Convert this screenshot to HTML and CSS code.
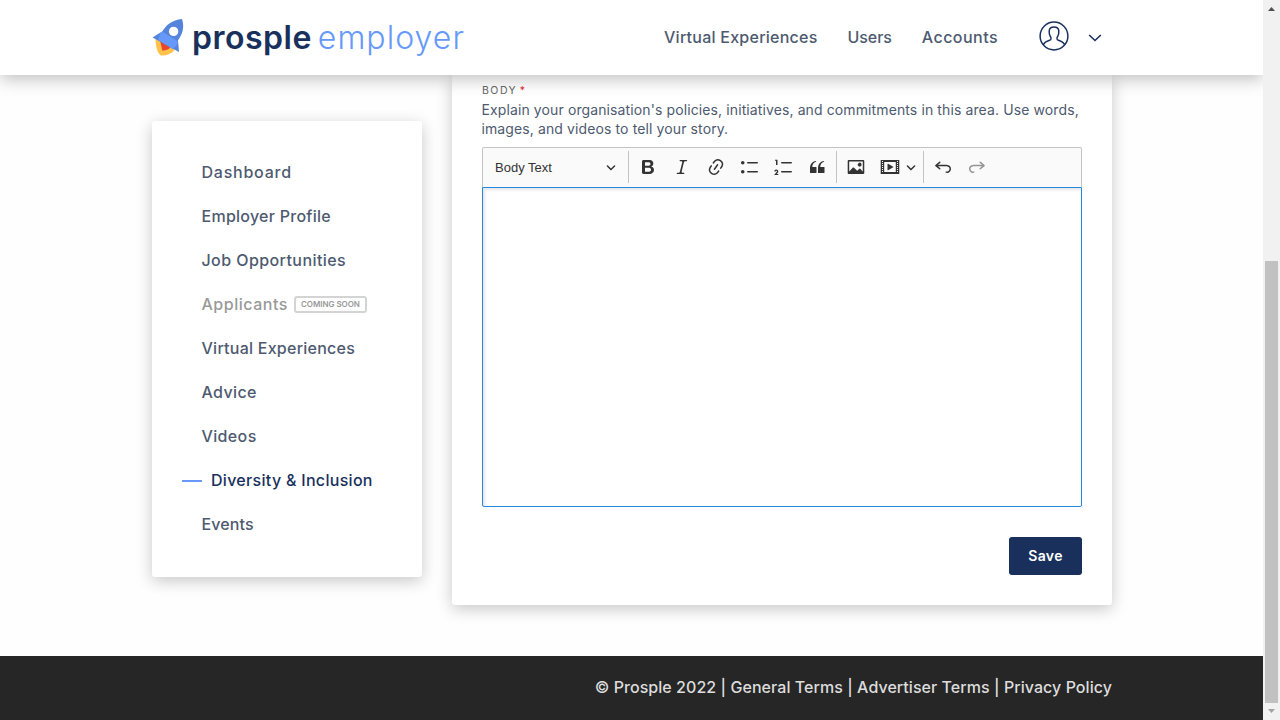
FILE: index.html
```
<!DOCTYPE html>
<html lang="en">
<head>
<meta charset="utf-8">
<title>Prosple Employer</title>
<link rel="stylesheet" href="styles.css">
</head>
<body>
<div class="viewport">
<div class="page">
  <header class="header">
    <a class="logo">
      <svg class="rocket" width="33" height="40" viewBox="0 0 33 40">
        <path d="M3.500 20.500C3.500 30 6 36 9 37.500C14 38 19.500 36 23 31.500Z" fill="#ffc24b"/>
        <path d="M8 22.500L10.300 32.500C14 32.500 17.500 31.500 19 28Z" fill="#e8472e"/>
        <path d="M30 1C20 2 14 7 10 14L8 22L24 30L25.500 23C30 17 33 10 30 1Z" fill="#5584dc"/>
        <path d="M.5 19.500L10 13.500L26 22.500L27 34Z" fill="#5584dc"/>
        <path d="M10 13.500L26 23.500C25 27 23.500 29 20.500 31L6.500 22C7 18.500 8 15.500 10 13.500Z" fill="#6699fa"/>
        <circle cx="21.600" cy="13.400" r="4.700" fill="#fff"/>
      </svg>
      <span class="brand">prosple</span>
      <span class="product">employer</span>
    </a>
    <nav class="topnav">
      <a class="t-virtual">Virtual Experiences</a>
      <a class="t-users">Users</a>
      <a class="t-accounts">Accounts</a>
    </nav>
    <div class="account">
      <svg class="avatar" width="30" height="30" viewBox="0 0 30 30" fill="none" stroke="#19305d" stroke-width="1.500"><circle cx="15" cy="15" r="13.900"/><path d="M4.300 24C5 20.500 10 20 11.700 18.700C12.300 18 12.200 16.800 11.500 15.800C10.400 14 10 11.800 10.200 9.700C10.500 7.200 12.500 6 15 6S19.500 7.200 19.800 9.700C20 11.800 19.600 14 18.500 15.800C17.800 16.800 17.700 18 18.300 18.700C20 20 25 20.500 25.700 24"/></svg>
      <svg class="caret" width="14" height="8" viewBox="0 0 14 8" fill="none" stroke="#19305d" stroke-width="1.600"><path d="M1.200 1L7 6.500L12.800 1"/></svg>
    </div>
  </header>
  <main class="content">
    <aside class="sidebar">
      <a class="item t-dashboard">Dashboard</a>
      <a class="item t-profile">Employer Profile</a>
      <a class="item t-jobs">Job Opportunities</a>
      <a class="item muted">Applicants<span class="badge">COMING SOON</span></a>
      <a class="item t-virtual">Virtual Experiences</a>
      <a class="item t-advice">Advice</a>
      <a class="item t-advice">Videos</a>
      <a class="item active">Diversity &amp; Inclusion</a>
      <a class="item t-events">Events</a>
    </aside>
    <section class="panel">
      <div class="label">BODY <span class="required">*</span></div>
      <p class="help">Explain your organisation's policies, initiatives, and commitments in this area. Use words,<br>images, and videos to tell your story.</p>
      <div class="editor">
        <div class="toolbar">
          <div class="select">Body Text <svg class="arrow" viewBox="0 0 10 10"><path d="M.941 4.523a.75.75 0 1 1 1.060-1.060l3.006 3.005 3.005-3.005a.75.75 0 1 1 1.060 1.060l-3.549 3.550a.75.75 0 0 1-1.168-.136L.941 4.523z"/></svg></div>
          <span class="sep"></span>
          <span class="tool"><svg viewBox="0 0 20 20"><path d="M10.187 17H5.773c-.637 0-1.092-.138-1.364-.415-.273-.277-.409-.718-.409-1.323V4.738c0-.617.14-1.062.419-1.332.279-.27.73-.406 1.354-.406h4.680c.69 0 1.288.041 1.793.124.506.083.96.242 1.360.477.341.197.644.447.906.75a3.262 3.262 0 0 1 .808 2.162c0 1.401-.722 2.426-2.167 3.075C15.050 10.175 16 11.315 16 13.010a3.756 3.756 0 0 1-2.296 3.504 6.100 6.100 0 0 1-1.517.377c-.571.073-1.238.11-2 .11zm-.217-6.217H7v4.087h3.069c1.977 0 2.965-.69 2.965-2.072 0-.707-.256-1.220-.768-1.537-.512-.319-1.277-.478-2.296-.478zM7 5.130v3.619h2.606c.729 0 1.292-.067 1.690-.2a1.600 1.600 0 0 0 .91-.765c.165-.267.247-.566.247-.897 0-.707-.26-1.176-.778-1.409-.519-.232-1.310-.348-2.375-.348H7z"/></svg></span>
          <span class="tool"><svg viewBox="0 0 20 20"><path d="m9.586 14.633.021.004c-.036.335.095.655.393.962.082.083.173.15.274.201h1.474a.6.6 0 1 1 0 1.200H5.304a.6.6 0 0 1 0-1.200h1.150c.474-.07.809-.182 1.005-.334.157-.122.291-.32.404-.597l2.416-9.550a1.053 1.053 0 0 0-.281-.823 1.120 1.120 0 0 0-.442-.296H8.150a.6.6 0 0 1 0-1.200h6.443a.6.6 0 1 1 0 1.200h-1.195c-.376.056-.65.155-.823.296-.215.175-.423.439-.623.79l-2.366 9.347z"/></svg></span>
          <span class="tool"><svg viewBox="0 0 20 20"><path d="m11.077 15 .991-1.416a.75.75 0 1 1 1.229.86l-1.148 1.640a.748.748 0 0 1-.217.206 5.251 5.251 0 0 1-8.503-5.955.741.741 0 0 1 .12-.274l1.147-1.639a.75.75 0 1 1 1.228.86L4.933 10.700l.006.003a3.750 3.750 0 0 0 6.132 4.294l.006.004zm5.494-5.335a.748.748 0 0 1-.12.274l-1.147 1.639a.75.75 0 1 1-1.228-.86l.86-1.230a3.750 3.750 0 0 0-6.144-4.301l-.86 1.229a.75.75 0 0 1-1.229-.86l1.148-1.640a.748.748 0 0 1 .217-.206 5.251 5.251 0 0 1 8.503 5.955zm-4.563-2.532a.75.75 0 0 1 .184 1.045l-3.155 4.505a.75.75 0 1 1-1.229-.86l3.155-4.506a.75.75 0 0 1 1.045-.184z"/></svg></span>
          <span class="tool"><svg viewBox="0 0 20 20"><path d="M7 5.750c0 .414.336.75.75.75h9.500a.75.75 0 1 0 0-1.500h-9.500a.75.75 0 0 0-.75.75zm-6 0C1 4.784 1.777 4 2.750 4c.966 0 1.750.777 1.750 1.750 0 .966-.777 1.750-1.750 1.750C1.784 7.500 1 6.723 1 5.750zm6 9c0 .414.336.75.75.75h9.500a.75.75 0 1 0 0-1.500h-9.500a.75.75 0 0 0-.75.75zm-6 0c0-.966.777-1.750 1.750-1.750.966 0 1.750.777 1.750 1.750 0 .966-.777 1.750-1.750 1.750-.966 0-1.750-.777-1.750-1.750z"/></svg></span>
          <span class="tool"><svg viewBox="0 0 20 20"><path d="M7 5.750c0 .414.336.75.75.75h9.500a.75.75 0 1 0 0-1.500h-9.500a.75.75 0 0 0-.75.75zM3.500 3v5H2V3.700H1v-1h2.500V3zM.343 17.857l2.590-3.257H2.920a.6.6 0 1 0-1.040 0H.302a2 2 0 1 1 3.995 0h-.001c-.048.405-.16.734-.333.988-.175.254-.59.692-1.244 1.312H4.300v1h-4l.043-.043zM7 14.750a.75.75 0 0 1 .75-.75h9.500a.75.75 0 1 1 0 1.500h-9.500a.75.75 0 0 1-.75-.75z"/></svg></span>
          <span class="tool"><svg viewBox="0 0 20 20"><path d="M3 10.423a6.500 6.500 0 0 1 6.056-6.408l.038.67C6.448 5.423 5.354 7.663 5.220 10H9c.552 0 .5.432.5.986v4.511c0 .554-.448.503-1 .503h-5c-.552 0-.5-.449-.5-1.003v-4.574zm8 0a6.500 6.500 0 0 1 6.056-6.408l.038.67c-2.646.739-3.740 2.979-3.873 5.315H17c.552 0 .5.432.5.986v4.511c0 .554-.448.503-1 .503h-5c-.552 0-.5-.449-.5-1.003v-4.574z"/></svg></span>
          <span class="sep"></span>
          <span class="tool"><svg viewBox="0 0 20 20"><path d="M6.910 10.540c.26-.23.64-.21.88.03l3.360 3.140 2.230-2.060a.64.64 0 0 1 .87 0l2.520 2.970V4.500H3.200v10.120l3.710-4.080zm10.270-7.510c.6 0 1.090.47 1.090 1.050v11.840c0 .59-.49 1.060-1.090 1.060H2.790c-.6 0-1.090-.47-1.090-1.060V4.080c0-.58.49-1.050 1.100-1.050h14.380zm-5.220 5.560a1.960 1.960 0 1 1 3.400-1.960 1.960 1.960 0 0 1-3.400 1.960z"/></svg></span>
          <span class="tool"><svg viewBox="0 0 20 20"><path d="M18.680 3.030c.6 0 .59-.03.59.55v12.840c0 .59.01.56-.59.56H1.290c-.6 0-.59.03-.59-.56V3.580c0-.58-.01-.55.6-.55h17.380zM15.770 15V5H4.200v10h11.570zM2 4v1h1V4H2zm0 2v1h1V6H2zm0 2v1h1V8H2zm0 2v1h1v-1H2zm0 2v1h1v-1H2zm0 2v1h1v-1H2zM17 4v1h1V4h-1zm0 2v1h1V6h-1zm0 2v1h1V8h-1zm0 2v1h1v-1h-1zm0 2v1h1v-1h-1zm0 2v1h1v-1h-1zM7.500 7.177a.4.4 0 0 1 .593-.351l5.133 2.824a.4.4 0 0 1 0 .7l-5.133 2.824a.4.4 0 0 1-.593-.35V7.176v.001z"/></svg></span>
          <svg class="arrow media-arrow" viewBox="0 0 10 10"><path d="M.941 4.523a.75.75 0 1 1 1.060-1.060l3.006 3.005 3.005-3.005a.75.75 0 1 1 1.060 1.060l-3.549 3.550a.75.75 0 0 1-1.168-.136L.941 4.523z"/></svg>
          <span class="sep"></span>
          <span class="tool"><svg viewBox="0 0 20 20"><path id="undo" d="m5.042 9.367 2.189 1.837a.75.75 0 0 1-.965 1.149l-3.788-3.180a.747.747 0 0 1-.21-.284.75.75 0 0 1 .17-.945L6.230 4.762a.75.75 0 1 1 .964 1.150L4.863 7.866h8.917A.75.75 0 0 1 14 7.900a4 4 0 1 1-1.477 7.718l.344-1.489a2.500 2.500 0 1 0 1.094-4.730l.008-.032H5.042z"/></svg></span>
          <span class="tool disabled"><svg viewBox="0 0 20 20"><use href="#undo" transform="matrix(-1 0 0 1 20 0)"/></svg></span>
        </div>
        <div class="canvas"></div>
      </div>
      <button class="save">Save</button>
    </section>
  </main>
  <footer class="footer">© Prosple 2022 | General Terms | Advertiser Terms | Privacy Policy</footer>
</div>
<div class="scrollbar">
  <svg width="7" height="4" viewBox="0 0 7 4"><path d="M0 4L3.500 0L7 4Z" fill="#505050"/></svg>
  <div class="thumb"></div>
  <svg width="7" height="4" viewBox="0 0 7 4"><path d="M0 0L3.500 4L7 0Z" fill="#a3a3a3"/></svg>
</div>
</div>
</body>
</html>
```
FILE: styles.css
```
* { box-sizing: border-box; }
body { margin: 0; font-family: Inter, sans-serif; background: #fff; color: #4d5a70; }
.viewport { display: flex; width: 1280px; height: 720px; overflow: hidden; }
.page { width: 1263px; overflow: hidden; background: #fefefe; }

.header { position: relative; z-index: 1; display: flex; align-items: center; height: 75px; padding: 0 161px 0 152px; background: #fff; box-shadow: 0 4px 16px rgba(0, 0, 0, .25); }
.logo { display: flex; align-items: center; height: 75px; }
.rocket { display: block; }
.brand { margin-left: 7px; font-size: 32px; font-weight: 600; letter-spacing: .5px; color: #19305d; }
.product { margin-left: 6px; font-size: 32px; font-weight: 350; letter-spacing: 1.050px; color: #6699fa; }
.topnav { display: flex; gap: 30px; margin-left: auto; padding-bottom: 2px; font-size: 16px; font-weight: 480; }
.account { display: flex; align-items: center; gap: 19px; margin-left: 41px; }
.avatar { margin-bottom: 3px; }

.content { display: flex; gap: 30px; align-items: flex-start; height: 581px; padding: 0 151px 0 152px; }
.sidebar { width: 270px; height: 456px; margin-top: 46px; padding: 29px 30px; border-radius: 3px; background: #fff; box-shadow: 0 4px 16px rgba(0, 0, 0, .22); }
.item { display: flex; align-items: center; height: 44px; padding-left: 19.500px; font-size: 16px; font-weight: 480; white-space: nowrap; }
.muted { color: #999; letter-spacing: .52px; }
.badge { display: flex; align-items: center; height: 17px; margin-left: 6px; padding: 0 5px; border: 2px solid #d4d4d4; border-radius: 3px; font-size: 8px; font-weight: 600; letter-spacing: -.03px; }
.active { padding-left: 0; color: #19305d; letter-spacing: .3px; }
.active::before { content: ""; width: 20px; height: 2px; margin: 2px 9px 0 0; background: #6699fa; }
.t-virtual { letter-spacing: .25px; }
.t-users { letter-spacing: -.1px; }
.t-accounts { letter-spacing: .46px; }
.t-dashboard { letter-spacing: .76px; }
.t-profile { letter-spacing: .26px; }
.t-jobs { letter-spacing: .42px; }
.t-advice { letter-spacing: .36px; }
.t-events { letter-spacing: .12px; }

.panel { width: 660px; height: 530px; padding: 8px 30px 30px; border-radius: 0 0 3px 3px; background: #fff; box-shadow: 0 4px 16px rgba(0, 0, 0, .22); }
.label { height: 17px; font-size: 10.500px; line-height: 15px; letter-spacing: 1.500px; color: #666; }
.required { margin-left: -2px; color: #e02b2b; }
.help { margin: 0 0 9px -.5px; font-size: 14px; line-height: 19px; letter-spacing: .11px; white-space: nowrap; }
.toolbar { display: flex; align-items: center; height: 40px; padding: 0 0 1px 4px; border: 1px solid #c4c4c4; border-bottom: 0; border-radius: 2px 2px 0 0; background: #fafafa; fill: #333; }
.select { display: flex; align-items: center; justify-content: space-between; width: 141px; padding: 0 12px 0 8px; font: 13px "Liberation Sans", sans-serif; color: #333; }
.arrow { width: 10px; height: 10px; }
.media-arrow { margin: 0 7px 0 -1px; }
.sep { width: 1px; height: 32px; background: #c4c4c4; }
.select + .sep { margin: 0 2px 0 0; }
.tool { display: flex; justify-content: center; width: 33.900px; }
.tool svg { width: 20px; height: 20px; }
.tool + .sep { margin-left: 2px; margin-right: 2px; }
.media-arrow + .sep { margin-right: 2px; }
.disabled { opacity: .5; }
.canvas { height: 320px; border: 1px solid #2488dc; border-radius: 0 0 2px 2px; box-shadow: inset 2px 2px 3px rgba(0, 0, 0, .1); }
.save { display: block; width: 73px; height: 38px; margin: 30px 0 0 auto; padding: 0 0 2px; border: 0; border-radius: 3px; background: #19305d; color: #fff; font: 600 14px Inter, sans-serif; letter-spacing: .4px; }

.footer { height: 64px; padding-right: 151px; background: #262626; color: #ddd; font-size: 16px; font-weight: 500; line-height: 63px; letter-spacing: .055px; text-align: right; }

.scrollbar { display: flex; flex-direction: column; align-items: center; width: 17px; padding: 7px 0; background: #f1f1f1; }
.thumb { width: 13px; height: 442px; margin: 250px 0 6px; background: #c1c1c1; }
```
